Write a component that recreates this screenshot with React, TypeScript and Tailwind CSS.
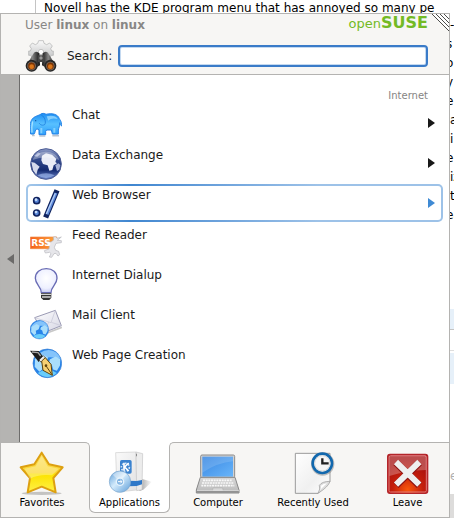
import * as React from "react";
import { clsx } from "clsx";

type IconProps = { className?: string };

function BinocularsIcon({ className }: IconProps) {
  return (
    <svg viewBox="0 0 96 96" className={className} aria-hidden>
      <defs>
        <linearGradient id="gear" x2="0" y2="1">
          <stop stopColor="#fafafa" />
          <stop offset="1" stopColor="#c4c5c6" />
        </linearGradient>
        <linearGradient id="barrel" x2="1">
          <stop stopColor="#171717" />
          <stop offset=".45" stopColor="#858585" />
          <stop offset="1" stopColor="#101010" />
        </linearGradient>
      </defs>
      <path
        d="M41 2h14l2 8 8 4 9-5 8 9-5 8 3 7h5v13h-6l-5 8H22l-5-8h-6V33h5l3-7-5-8 8-9 9 5 7-4z"
        fill="url(#gear)"
        stroke="#acadae"
        strokeWidth="2"
      />
      <circle cx="48" cy="36" r="8" fill="#fff" stroke="#aaa" strokeWidth="2" />
      <path d="M27 38q8-6 16 2l2 36-24 14L3 78z" fill="url(#barrel)" />
      <path d="M69 38q-8-6-16 2l-2 36 24 14 18-12z" fill="url(#barrel)" />
      <path d="M39 46h18v20H39z" fill="#444" />
      <circle cx="48" cy="54" r="5" fill="#999" />
      <circle cx="20" cy="77" r="18" fill="#262626" />
      <circle cx="76" cy="77" r="18" fill="#262626" />
      <circle cx="20" cy="78" r="12" fill="#7d3505" stroke="#777" strokeWidth="2" />
      <circle cx="76" cy="78" r="12" fill="#7d3505" stroke="#777" strokeWidth="2" />
      <circle cx="20" cy="80" r="7" fill="#d9761a" />
      <circle cx="76" cy="80" r="7" fill="#d9761a" />
    </svg>
  );
}

function ElephantIcon({ className }: IconProps) {
  return (
    <svg viewBox="0 0 96 96" className={className} aria-hidden>
      <defs>
        <linearGradient id="elephant" x2="0" y2="1">
          <stop stopColor="#1c8df2" />
          <stop offset=".5" stopColor="#58c0ff" />
          <stop offset="1" stopColor="#2fa0fa" />
        </linearGradient>
      </defs>
      <path d="M6 82h8M28 84h18M67 83h20" stroke="#b9c3cf" strokeWidth="5" />
      <path
        d="M2 78C-1 60 0 42 6 34c6-9 16-10 24-14 6-6 14-4 18-1 16-4 36-2 40 14 3 3 6 6 7 21-3-1-5-6-6-10 0 12-3 16-4 22v12H67l-3-12H50l-3 4v10H27V66c-4-4-8-4-10 0-3 4-1 9-5 12z"
        fill="url(#elephant)"
        stroke="#2382e6"
        strokeWidth="3"
        strokeLinejoin="round"
      />
      <path d="M50 25c13-4 29-2 33 8-12-3-22-2-28 5z" fill="#a5e0ff" opacity=".7" />
      <path d="M34 21c11 6 14 20 11 28-7 5-14 2-18-4" fill="none" stroke="#1473d8" strokeWidth="2" />
      <path d="M8 40c-3 12-3 22-2 34" fill="none" stroke="#a5e0ff" strokeWidth="4" />
      <circle cx="17" cy="38" r="2" fill="#0c4c9c" />
      <path d="M34 60v16M73 60v14" stroke="#92d9ff" strokeWidth="6" opacity=".8" />
    </svg>
  );
}

function DarkGlobeIcon({ className }: IconProps) {
  return (
    <svg viewBox="0 0 96 96" className={className} aria-hidden>
      <defs>
        <linearGradient id="night" x2="0" y2="1">
          <stop stopColor="#8d9bc6" />
          <stop offset=".35" stopColor="#334a8c" />
          <stop offset=".7" stopColor="#142a70" />
          <stop offset="1" stopColor="#6d88cc" />
        </linearGradient>
      </defs>
      <circle cx="48" cy="48" r="46" fill="url(#night)" stroke="#4b5b94" strokeWidth="3" />
      <path d="M36 23l12-7 18 4 13 13-3 9 5 4-10 6-4 14-9 2-5-16-14-4-5-11z" fill="#e9ecf6" />
      <path d="M4 42l10 2 15 12-6 9-4 15-10-13z" fill="#d5daec" />
      <path d="M76 52l9-6 6 5-3 14-7 4zM12 24l12-11 8 4-10 9z" fill="#a6b2d8" />
      <path d="M8 36C18 4 76 2 88 36 62 26 34 26 8 36z" fill="#fff" opacity=".3" />
      <path d="M22 82q26 16 52 0-26-12-52 0z" fill="#a7c0f4" opacity=".6" />
    </svg>
  );
}

function BrowserIcon({ className }: IconProps) {
  return (
    <svg viewBox="0 0 96 96" className={className} aria-hidden>
      <path d="M78 14L50 81" stroke="#10235f" strokeWidth="16" strokeLinecap="square" />
      <path d="M78 15L51 79" stroke="#5a87d8" strokeWidth="9" />
      <path d="M76 16L49 78" stroke="#b2cdf6" strokeWidth="4" />
      <circle cx="20" cy="38" r="9" fill="#5a87d8" stroke="#10235f" strokeWidth="5" />
      <circle cx="20" cy="75" r="9" fill="#5a87d8" stroke="#10235f" strokeWidth="5" />
      <circle cx="18" cy="35" r="4" fill="#c8dcfa" />
      <circle cx="18" cy="72" r="4" fill="#c8dcfa" />
    </svg>
  );
}

function FeedIcon({ className }: IconProps) {
  return (
    <svg viewBox="0 0 96 96" className={className} aria-hidden>
      <defs>
        <linearGradient id="feed" x2="1">
          <stop stopColor="#f4611b" />
          <stop offset="1" stopColor="#fda63b" />
        </linearGradient>
      </defs>
      <path d="M1 27h80L68 62H1z" fill="url(#feed)" stroke="#f08a45" strokeWidth="2" />
      <path
        d="M94 27l-13 4-4-5-7 1 1 9-8 6-10-1-3 7 8 7-1 8-14 5 3 7 13-2 4 4-5 10 7 1 7-11 6-1 6 8 5-4-3-10-9-3-4-9 5-12 16-2v-6l-12-1z"
        fill="#e6e6ea"
        stroke="#b6b7bd"
        strokeWidth="2"
        strokeLinejoin="round"
      />
      <text x="4" y="53" fill="#fff" fontSize="27" fontWeight="bold" fontFamily="DejaVu Sans, sans-serif">
        RSS
      </text>
    </svg>
  );
}

function BulbIcon({ className }: IconProps) {
  return (
    <svg viewBox="0 0 96 96" className={className} aria-hidden>
      <defs>
        <radialGradient id="bulb" cx=".5" cy=".4" r=".6">
          <stop stopColor="#fff" />
          <stop offset=".7" stopColor="#eef0ff" />
          <stop offset="1" stopColor="#c9ccf2" />
        </radialGradient>
      </defs>
      <path
        d="M34 74C34 56 16 50 16 31 16 13 30 2 49 2s32 11 32 29c0 19-18 25-18 43z"
        fill="url(#bulb)"
        stroke="#686bb4"
        strokeWidth="4"
      />
      <path d="M33 75h31v14l-6 7H40l-7-7z" fill="#333" />
      <path d="M33 79h30M36 87h26" stroke="#d2d2d2" strokeWidth="4" />
    </svg>
  );
}

// bright blue globe shared by the mail and web page icons
function BlueGlobe({ cx, cy, r }: { cx: number; cy: number; r: number }) {
  return (
    <g transform={`translate(${cx} ${cy}) scale(${r / 42})`}>
      <circle r="42" fill="#2784ea" stroke="#3b82d4" strokeWidth="2" />
      <path d="M-38-10Q-24-38 4-39q26 2 35 26Q6-24-38-10z" fill="#9cd4ff" opacity=".8" />
      <path d="M-36-12l24-13 14 8-5 15-13 7 2 12-9 8-14-15zM8-12l16-8 14 8-1 18-9 16-11-4-4-14-9-6z" fill="#a9defc" />
      <path d="M-28 28Q0 10 28 28 0 52-28 28z" fill="#7be0ff" opacity=".8" />
    </g>
  );
}

function MailIcon({ className }: IconProps) {
  return (
    <svg viewBox="0 0 96 96" className={className} aria-hidden>
      <defs>
        <linearGradient id="envelope" x2="1" y2="1">
          <stop stopColor="#fff" />
          <stop offset="1" stopColor="#d6d6e4" />
        </linearGradient>
      </defs>
      <path d="M43 78l53-20" stroke="#c8c8c8" strokeWidth="5" />
      <path d="M14 29L76 7l18 46-52 21z" fill="url(#envelope)" stroke="#9a9ab4" strokeWidth="3" />
      <path d="M14 29l49 15L76 7M42 74l14-32M94 53L64 43" fill="none" stroke="#c4c4d4" strokeWidth="2" />
      <BlueGlobe cx={28} cy={65} r={28} />
    </svg>
  );
}

function WebPageIcon({ className }: IconProps) {
  return (
    <svg viewBox="0 0 96 96" className={className} aria-hidden>
      <BlueGlobe cx={52} cy={46} r={43} />
      <path d="M0 8l26 1 14 17-14 16z" fill="#1c1c1c" />
      <path d="M6 12l18 2 8 10" fill="none" stroke="#a4a4a4" strokeWidth="4" />
      <path d="M27 36l13-13 7 7-13 13z" fill="#ececec" stroke="#333" strokeWidth="2" />
      <path d="M35 39l11-10 17 20 4 33-28-15z" fill="#f6cf72" stroke="#5d430e" strokeWidth="3" strokeLinejoin="round" />
      <path d="M66 80L49 55" stroke="#5d430e" strokeWidth="3" />
      <circle cx="48" cy="53" r="4" fill="#5d430e" />
    </svg>
  );
}

function StarIcon({ className }: IconProps) {
  return (
    <svg viewBox="0 0 144 144" className={className} aria-hidden>
      <defs>
        <linearGradient id="star" x2="0" y2="1">
          <stop stopColor="#fbe064" />
          <stop offset=".5" stopColor="#fbd52b" />
          <stop offset=".55" stopColor="#fce300" />
          <stop offset="1" stopColor="#fff04a" />
        </linearGradient>
      </defs>
      <ellipse cx="71" cy="136" rx="60" ry="5" fill="#c4c3c1" />
      <path
        d="M71 14l22 35 41 9-28 32 7 43-42-17-42 17 7-43L8 58l41-9z"
        fill="url(#star)"
        stroke="#dda011"
        strokeWidth="6"
        strokeLinejoin="round"
      />
      <path d="M71 24l18 31 33 7-20 20Q62 78 36 92L20 62l33-7z" fill="#fff" opacity=".3" />
    </svg>
  );
}

function PackageIcon({ className }: IconProps) {
  return (
    <svg viewBox="0 0 144 144" className={className} aria-hidden>
      <defs>
        <linearGradient id="carton" x2="1" y2="1">
          <stop stopColor="#fafafa" />
          <stop offset="1" stopColor="#e2e2e3" />
        </linearGradient>
        <linearGradient id="disc" x2="1" y2="1">
          <stop stopColor="#5b9cd8" />
          <stop offset=".45" stopColor="#d4ebfb" />
          <stop offset="1" stopColor="#5b9cd8" />
        </linearGradient>
        <linearGradient id="cartonShade" x2="1">
          <stop stopColor="#888" />
          <stop offset="1" stopColor="#fff" />
        </linearGradient>
      </defs>
      <path d="M106 92l32 9-26 24-12 4z" fill="url(#cartonShade)" opacity=".8" />
      <path d="M29 14l61-2 2 114-59 6z" fill="url(#carton)" stroke="#cdcdcd" strokeWidth="2" />
      <path d="M90 12l20 5-2 108-16 3z" fill="#ececec" stroke="#c6c6c7" strokeWidth="2" />
      <path d="M90 17h3v8h-3z" fill="#8b8b8b" />
      <path d="M66 98l26 1 16-3v13l-16 5-26 1z" fill="#2f78c8" />
      <rect x="42" y="36" width="35" height="41" rx="5" fill="#3a82cf" />
      <circle cx="58" cy="58" r="12" fill="none" stroke="#cfe4f8" strokeWidth="5" strokeDasharray="5 4" />
      <path d="M54 44v24M68 45L56 57l12 12" fill="none" stroke="#fff" strokeWidth="5" />
      <circle cx="42" cy="101" r="32" fill="url(#disc)" stroke="#7ba6cd" strokeWidth="2" />
      <path d="M42 101L20 80q20-18 42-2z" fill="#fff" opacity=".4" />
      <circle cx="42" cy="101" r="11" fill="#7fb3e2" stroke="#e6f3fc" strokeWidth="4" />
      <path d="M36 101h12M43 96l5 5-5 5" fill="none" stroke="#fff" strokeWidth="3" />
    </svg>
  );
}

function LaptopIcon({ className }: IconProps) {
  return (
    <svg viewBox="0 0 144 144" className={className} aria-hidden>
      <defs>
        <linearGradient id="screen" x2="1" y2="1">
          <stop stopColor="#3987e2" />
          <stop offset="1" stopColor="#68b5fa" />
        </linearGradient>
        <linearGradient id="deck" x2="0" y2="1">
          <stop stopColor="#d8d8d8" />
          <stop offset="1" stopColor="#b9b9b9" />
        </linearGradient>
      </defs>
      <rect x="20" y="21" width="102" height="68" rx="4" fill="#d2d2d2" stroke="#8b8b8b" strokeWidth="3" />
      <path d="M25 26h92v60H25z" fill="url(#screen)" />
      <path d="M25 26h92v14Q70 44 25 74z" fill="#fff" opacity=".14" />
      <path d="M19 88h104l12 38v9H7v-9z" fill="url(#deck)" stroke="#888" strokeWidth="3" />
      <path d="M27 97h88M24 105h94M22 113h99" stroke="#f7f7f7" strokeWidth="5" strokeDasharray="6 2" />
      <path d="M57 120h29l2 11H55z" fill="#d8d8d8" stroke="#999" strokeWidth="1" />
      <path d="M8 131h126" stroke="#888" strokeWidth="5" />
      <path d="M9 128h126" stroke="#eee" strokeWidth="2" />
    </svg>
  );
}

function RecentIcon({ className }: IconProps) {
  return (
    <svg viewBox="0 0 144 144" className={className} aria-hidden>
      <defs>
        <linearGradient id="sheet" x2="1" y2="1">
          <stop stopColor="#fff" />
          <stop offset=".6" stopColor="#f0f0f0" />
          <stop offset="1" stopColor="#fff" />
        </linearGradient>
      </defs>
      <path d="M19 16h104v84l-36 36H19z" fill="url(#sheet)" stroke="#9b9b9b" strokeWidth="3" />
      <path d="M87 136q8-14 4-24 8-12 32-12-4 16-36 36z" fill="#ddd" stroke="#999" strokeWidth="2" />
      <path d="M93 126q5-8 3-13 7-6 18-7z" fill="#fff" />
      <circle cx="101" cy="48" r="35" fill="#777" opacity=".45" />
      <circle cx="100" cy="46" r="29" fill="#f7f7f7" stroke="#1268ae" strokeWidth="8" />
      <circle cx="100" cy="46" r="23" fill="none" stroke="#c8c8c8" strokeWidth="2" />
      <path d="M100 31v15h19" fill="none" stroke="#222" strokeWidth="7" />
    </svg>
  );
}

function LeaveIcon({ className }: IconProps) {
  return (
    <svg viewBox="0 0 144 144" className={className} aria-hidden>
      <defs>
        <radialGradient id="leave" cx=".5" cy=".9" r=".75">
          <stop stopColor="#f8570c" />
          <stop offset=".5" stopColor="#c41e0c" />
          <stop offset="1" stopColor="#a51010" />
        </radialGradient>
      </defs>
      <rect x="11" y="19" width="120" height="117" rx="7" fill="url(#leave)" stroke="#b3252a" strokeWidth="4" />
      <rect x="15" y="23" width="112" height="109" rx="4" fill="none" stroke="#e07a7d" strokeWidth="3" />
      <path d="M16 24h110v42Q70 67 16 84z" fill="#fff" opacity=".26" />
      <path d="M36 44l70 68M106 44l-70 68" stroke="#8d1313" strokeWidth="22" />
      <path d="M36 42l70 68M106 42l-70 68" stroke="#efefef" strokeWidth="18" />
    </svg>
  );
}

function ResizeGrip({ className }: IconProps) {
  return (
    <svg viewBox="0 0 17 17" className={className} aria-hidden>
      <path d="M0 0h17v17z" fill="#fff" />
      <path d="M0 0l17 17M4 0l13 13M8 0l9 9M12 0l5 5" stroke="#4c4c4a" strokeWidth="1" />
    </svg>
  );
}

type MenuItem = { label: string; icon: React.ComponentType<IconProps>; submenu?: boolean };

const items: MenuItem[] = [
  { label: "Chat", icon: ElephantIcon, submenu: true },
  { label: "Data Exchange", icon: DarkGlobeIcon, submenu: true },
  { label: "Web Browser", icon: BrowserIcon, submenu: true },
  { label: "Feed Reader", icon: FeedIcon },
  { label: "Internet Dialup", icon: BulbIcon },
  { label: "Mail Client", icon: MailIcon },
  { label: "Web Page Creation", icon: WebPageIcon },
];

const tabs: MenuItem[] = [
  { label: "Favorites", icon: StarIcon },
  { label: "Applications", icon: PackageIcon },
  { label: "Computer", icon: LaptopIcon },
  { label: "Recently Used", icon: RecentIcon },
  { label: "Leave", icon: LeaveIcon },
];

// line starts of the article that stay visible beside the menu
const articleEdge = [
  { text: "-", cut: false },
  { text: "s", cut: true },
  { text: "o", cut: true },
  { text: "y", cut: true },
  { text: "e", cut: true },
  { text: "a", cut: false },
  { text: "i", cut: false },
  { text: "e", cut: true },
  { text: "iz", cut: false },
  { text: "t", cut: false },
  { text: "ea", cut: true },
];

function MenuRow({ item, active, onSelect }: { item: MenuItem; active: boolean; onSelect: () => void }) {
  const Icon = item.icon;
  return (
    <li>
      <button
        type="button"
        onClick={onSelect}
        aria-current={active ? "true" : undefined}
        className={clsx(
          "block w-full rounded-[5px] p-[2px] text-left",
          active && "bg-linear-to-r from-[#a3c7ea] via-[#3f86d0] via-25% to-[#9dc2e8] to-70%",
        )}
      >
        <span className="flex h-[34px] items-start gap-[10px] rounded-[3px] bg-white pr-[6px] pl-[2px]">
          <Icon className="size-8 self-end" />
          <span className="flex-1 text-[12px] leading-[18px]">{item.label}</span>
          {item.submenu && (
            <svg
              viewBox="0 0 7 10"
              aria-hidden
              className={clsx("h-[10px] w-[7px] self-center", active ? "fill-[#3f8ad4]" : "fill-[#181818]")}
            >
              <path d="M0 0l7 5-7 5z" />
            </svg>
          )}
        </span>
      </button>
    </li>
  );
}

function Tab({ tab, active, onSelect }: { tab: MenuItem; active: boolean; onSelect: () => void }) {
  const Icon = tab.icon;
  return (
    <button
      type="button"
      role="tab"
      aria-selected={active}
      onClick={onSelect}
      className={clsx(
        "flex flex-col bg-[#f7f6f4] first:pr-[6px] last:pl-[6px]",
        active ? "relative z-10 pb-1" : "border-t border-[#b4b3b1] pb-[5px]",
      )}
    >
      <span
        className={clsx(
          "flex w-full flex-1 flex-col items-center pb-[2px]",
          active ? "rounded-b-[6px] border-x border-b border-[#b4b3b1] bg-white pt-[6px]" : "pt-[5px]",
        )}
      >
        <Icon className="size-12" />
        <span className="text-[10px] leading-[14px] whitespace-nowrap text-black">{tab.label}</span>
      </span>
      {active && (
        <>
          <span className="absolute top-0 -left-[5px] size-[6px] bg-white">
            <span className="block size-full rounded-tr-[5px] border-t border-r border-[#b4b3b1] bg-[#f7f6f4]" />
          </span>
          <span className="absolute top-0 -right-[5px] size-[6px] bg-white">
            <span className="block size-full rounded-tl-[5px] border-t border-l border-[#b4b3b1] bg-[#f7f6f4]" />
          </span>
        </>
      )}
    </button>
  );
}

export default function App() {
  const [query, setQuery] = React.useState("");
  const [selected, setSelected] = React.useState("Web Browser");
  const [tab, setTab] = React.useState("Applications");

  return (
    <div className="flex min-h-screen flex-col bg-white font-['DejaVu_Sans',sans-serif] text-[12px] text-[#1a1a1a]">
      <div className="flex h-[13px] overflow-hidden pl-[35px]">
        <p className="border-l border-[#c4c4c4] pl-2 leading-4 whitespace-nowrap text-black">
          Novell has the KDE program menu that has annoyed so many pe
        </p>
      </div>

      <div className="flex flex-1">
        <main className="flex min-w-0 flex-1 flex-col border border-[#b4b3b1]">
          <header className="relative border-b border-[#b4b3b1] bg-[#f7f6f4] pt-[3px] pr-[21px] pb-[2px] pl-6">
            <div className="flex h-4 items-start justify-between">
              <p className="leading-4 text-[#888785]">
                User <b>linux</b> on <b>linux</b>
              </p>
              <p className="text-[13px] leading-3 text-[#73ba25]">
                open<b className="text-[16px] leading-3">SUSE</b>
              </p>
            </div>
            <div className="mt-[7px] flex items-center">
              <BinocularsIcon className="size-8" />
              <label htmlFor="search" className="ml-[10px] leading-4">
                Search:
              </label>
              <input
                id="search"
                type="text"
                value={query}
                onChange={(e) => setQuery(e.target.value)}
                className="ml-[6px] h-[22px] min-w-0 flex-1 rounded-[4px] border-2 border-[#3a7bc8] bg-white px-1 inset-ring inset-ring-[#c4d9f0] outline-none"
              />
            </div>
            <ResizeGrip className="absolute top-0 right-0 size-[17px]" />
          </header>

          <div className="flex flex-1">
            <button
              type="button"
              aria-label="Back"
              className="flex w-[19px] shrink-0 items-center justify-end border-r border-[#6d6c6b] bg-[#b5b4b2] pr-[5px]"
            >
              <svg viewBox="0 0 7 10" className="h-[10px] w-[7px] fill-[#6b6a69]" aria-hidden>
                <path d="M7 0L0 5l7 5z" />
              </svg>
            </button>
            <section className="flex-1 px-[6px] pt-[13px]">
              <h2 className="pr-[15px] text-right text-[10px] leading-4 text-[#858483]">Internet</h2>
              <ul className="flex flex-col gap-[2px]">
                {items.map((item) => (
                  <MenuRow
                    key={item.label}
                    item={item}
                    active={item.label === selected}
                    onSelect={() => setSelected(item.label)}
                  />
                ))}
              </ul>
            </section>
          </div>

          <div role="tablist" className="grid grid-cols-[88fr_81fr_96fr_94fr_89fr]">
            {tabs.map((t) => (
              <Tab key={t.label} tab={t} active={t.label === tab} onSelect={() => setTab(t.label)} />
            ))}
          </div>
        </main>

        <aside className="flex w-1 shrink-0 flex-col overflow-hidden pt-[3px] text-black">
          {articleEdge.map((line, i) => (
            <p key={i} className={clsx("leading-[19px]", line.cut && "-ml-1")}>
              {line.text}
            </p>
          ))}
          <div className="mt-[84px] h-[21px] border-b border-[#c4c4c4] bg-[#e6f0f9]" />
          <div className="h-[21px] border-b border-[#dedede]" />
          <div className="mt-[2px] h-[31px] bg-[#e6f0f9]" />
          <p className="mt-auto pb-[10px] leading-4 text-[#b0b0b0]">e</p>
          <div className="h-6 bg-[#dddcdb]" />
        </aside>
      </div>
    </div>
  );
}
